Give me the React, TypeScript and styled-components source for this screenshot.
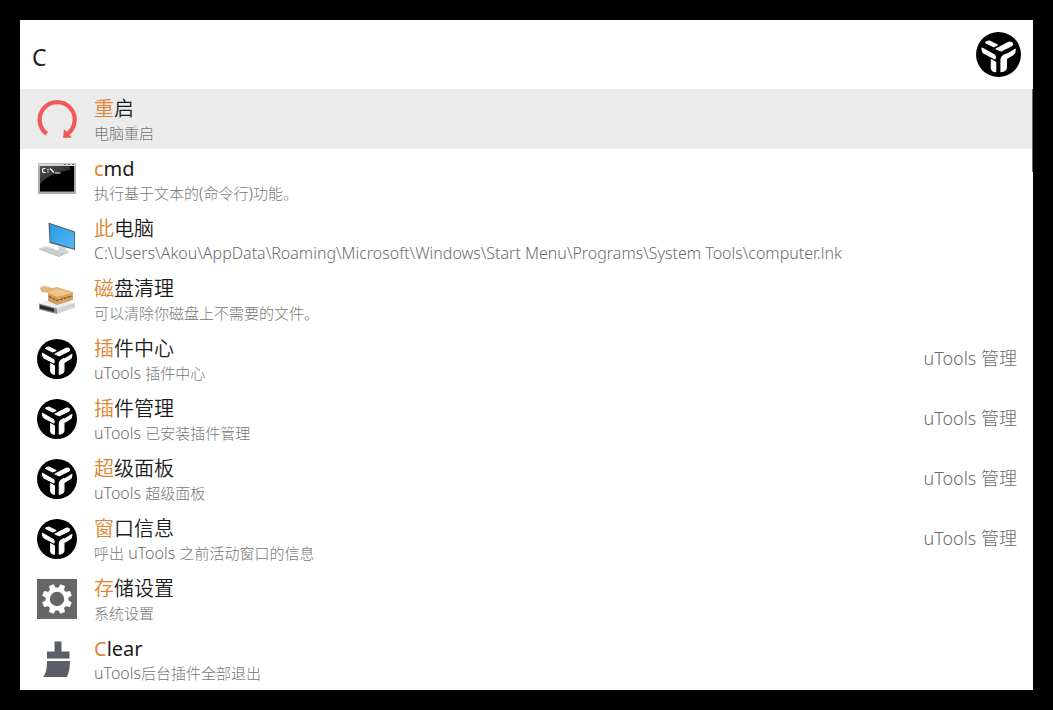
import React from "react";
import styled, { createGlobalStyle } from "styled-components";

const GlobalStyle = createGlobalStyle`
  * { box-sizing: border-box; }
  body {
    margin: 0;
    background: #000;
    font-family: "Noto Sans", "Noto Sans CJK SC", sans-serif;
  }
`;

const Desktop = styled.div`
  min-height: 100vh;
  padding: 20px;
  background: #000;
`;

const Launcher = styled.main`
  background: #fff;
  padding-bottom: 1px;
`;

const SearchBar = styled.header`
  display: flex;
  align-items: center;
  height: 69px;
  padding: 0 12px;
`;

const SearchInput = styled.input`
  flex: 1;
  min-width: 0;
  height: 56px;
  padding: 5px 0 0;
  border: 0;
  outline: 0;
  background: transparent;
  color: #222;
  font-family: inherit;
  font-size: 23px;
`;

const LogoButton = styled.button`
  display: block;
  width: 45px;
  height: 45px;
  padding: 0;
  border: 0;
  border-radius: 50%;
  background: transparent;
`;

const Results = styled.ul`
  position: relative;
  margin: 0;
  padding: 0;
  list-style: none;
`;

const ScrollThumb = styled.div`
  position: absolute;
  top: 0;
  right: 0;
  width: 1px;
  height: 83px;
  background: #6a6a6a;
`;

const Row = styled.li<{ $active?: boolean }>`
  display: flex;
  align-items: center;
  gap: 17px;
  height: 60px;
  padding: 0 16px 0 17px;
  background: ${(p) => (p.$active ? "#ebebeb" : "#fff")};
`;

const IconBox = styled.span`
  flex: none;
  width: 40px;
  height: 40px;
  svg { display: block; }
`;

const Texts = styled.div`
  flex: 1;
  min-width: 0;
  padding-bottom: 1px;
`;

const Title = styled.div`
  font-family: "Noto Sans", "Noto Sans CJK SC DemiLight", "Noto Sans CJK SC", sans-serif;
  font-size: 20px;
  line-height: 28px;
  color: #1c1c1c;
  white-space: nowrap;
`;

const Match = styled.span`
  color: #e08433;
`;

const Detail = styled.div`
  font-size: 15px;
  font-weight: 300;
  line-height: 20px;
  color: #777;
  white-space: nowrap;
  overflow: hidden;
  text-overflow: ellipsis;
`;

const Latin = styled.span`
  font-size: 16px;
  color: #6c6c6c;
`;

const Source = styled.span`
  padding-bottom: 2px;
  font-size: 18px;
  font-weight: 300;
  line-height: 24px;
  color: #6c6c6c;
`;

const UToolsLogo = () => (
  <svg width="100%" height="100%" viewBox="0 0 135 135" aria-hidden="true">
    <circle cx="67.500" cy="67.500" r="67.500" fill="#000" />
    <g fill="#fff" stroke="#fff" strokeWidth="3.500" strokeLinejoin="round">
      <path d="M29 32Q31 27 40 27L64 39L53 44Z" />
      <path d="M60 51L98 31Q109 29 110 37Q108 42 101 44L75 57Z" />
      <path d="M18 48L55 69Q60 73 57 81L24 64Q18 60 18 48Z" />
      <path d="M93 67L118 52Q118 63 111 68L93 79Z" />
      <path d="M46 83L59 91V119Q48 118 46 109Z" />
      <path d="M75 83Q76 75 83 70L91 66V108Q89 118 75 119Z" />
    </g>
  </svg>
);

const RestartIcon = () => (
  <svg width="40" height="40" viewBox="0 0 40 40" aria-hidden="true">
    <path d="M9.800 34.800A17.500 17.500 0 1 1 30.500 34.800" fill="none" stroke="#f25a5a" strokeWidth="4.200" />
    <path d="M27 30L35 38.500L26 39Z" fill="#f25a5a" />
  </svg>
);

const TerminalIcon = () => (
  <svg width="40" height="40" viewBox="0 0 40 40" aria-hidden="true">
    <defs>
      <linearGradient id="glass" x1="0" y1="0" x2="1" y2="1">
        <stop offset="0" stopColor="#555" />
        <stop offset="1" stopColor="#171717" />
      </linearGradient>
    </defs>
    <rect x="1" y="4" width="38" height="31" rx="1" fill="#aaa" />
    <rect x="1.500" y="4.500" width="37" height="2.500" fill="#d4d4d4" />
    <path d="M27 5.500H29M31 5.500H33M35 5.500H37" stroke="#777" />
    <rect x="3" y="7" width="34" height="25.500" fill="#000" />
    <path d="M3 7H33V11Q12 14 3 25Z" fill="url(#glass)" />
    <path d="M8.500 9.500H6.500L5.500 10.500V12.500L6.500 13.500H8.500M11 10V11.200M11 12.300V13.500M13 9.500L17 13.500M18 14H23.500" fill="none" stroke="#fff" strokeWidth="1.200" />
  </svg>
);

const ComputerIcon = () => (
  <svg width="40" height="40" viewBox="0 0 40 40" aria-hidden="true">
    <defs>
      <linearGradient id="screen" x1="0" y1="0" x2="1" y2="1">
        <stop offset="0" stopColor="#279be5" />
        <stop offset="1" stopColor="#57b8f3" />
      </linearGradient>
    </defs>
    <path d="M21 25L29 27V31L33 33L29 35L18 33L22 30Z" fill="#d1d5d8" />
    <path d="M11.500 3.500L38 12.500V31L12.500 24Z" fill="#526878" />
    <path d="M13 5L37 13.500V29.500L13.500 22.500Z" fill="url(#screen)" />
    <path d="M2 29.500L9 27L29 34L22 37.500Z" fill="#d4d8da" />
    <path d="M2 30L22 37.500L29 34" fill="none" stroke="#b4babd" />
    <path d="M6 30L23 36M9 29L26 35M7 31L12 28M12 33L17 30M17 35L22 32" stroke="#b5babd" strokeWidth=".6" />
  </svg>
);

const CleanupIcon = () => (
  <svg width="40" height="40" viewBox="0 0 40 40" aria-hidden="true">
    <path d="M2 25L17 18L38 24.500L20 31Z" fill="#eee" />
    <path d="M2 24.500L20 29.500V35L2 30.500Z" fill="#8a8a8a" />
    <path d="M3 26L17 29.500V33L3 29.500Z" fill="#2d2d2d" />
    <path d="M20 29.500L38 23.500V28.500L20 35Z" fill="#d2d2d2" />
    <path d="M3 10Q3 7 8 7L15 9L20 8L36 13L35 17L19 19L12 14L5 13Z" fill="#e2b579" />
    <path d="M12 13L20 10L36 14L20 18Z" fill="#efc58a" />
    <path d="M11 14L20 18V26L11 22Z" fill="#d39c58" />
    <path d="M20 18L36 14V21L20 26Z" fill="#d6a262" />
    <path d="M12 17.500L20 21.500L35 17" fill="none" stroke="#60452d" strokeWidth="1" strokeDasharray="3 1" />
  </svg>
);

const teeth = [22.5, 67.5, 112.5, 157.5, 202.5, 247.5, 292.5, 337.5];

const SettingsIcon = () => (
  <svg width="40" height="40" viewBox="0 0 40 40" aria-hidden="true">
    <rect width="40" height="40" fill="#666" />
    <circle cx="20" cy="20" r="9.300" fill="none" stroke="#fff" strokeWidth="4.200" />
    {teeth.map((angle) => (
      <path key={angle} d="M16.700 10L17.600 5H22.400L23.300 10Z" fill="#fff" transform={`rotate(${angle} 20 20)`} />
    ))}
  </svg>
);

const BrushIcon = () => (
  <svg width="40" height="40" viewBox="0 0 40 40" aria-hidden="true">
    <path d="M17.500 2.500H24.500V12.500H32.500V19.500H10V12.500H17.500ZM10 22H33Q33 31 30 38H6Q10 34 10 22Z" fill="#5c5f69" />
  </svg>
);

type Result = {
  icon: React.ComponentType;
  match: string;
  rest: string;
  detail: string;
  source?: string;
};

const results: Result[] = [
  { icon: RestartIcon, match: "重", rest: "启", detail: "电脑重启" },
  { icon: TerminalIcon, match: "c", rest: "md", detail: "执行基于文本的(命令行)功能。" },
  { icon: ComputerIcon, match: "此", rest: "电脑", detail: "C:\\Users\\Akou\\AppData\\Roaming\\Microsoft\\Windows\\Start Menu\\Programs\\System Tools\\computer.lnk" },
  { icon: CleanupIcon, match: "磁", rest: "盘清理", detail: "可以清除你磁盘上不需要的文件。" },
  { icon: UToolsLogo, match: "插", rest: "件中心", detail: "uTools 插件中心", source: "uTools 管理" },
  { icon: UToolsLogo, match: "插", rest: "件管理", detail: "uTools 已安装插件管理", source: "uTools 管理" },
  { icon: UToolsLogo, match: "超", rest: "级面板", detail: "uTools 超级面板", source: "uTools 管理" },
  { icon: UToolsLogo, match: "窗", rest: "口信息", detail: "呼出 uTools 之前活动窗口的信息", source: "uTools 管理" },
  { icon: SettingsIcon, match: "存", rest: "储设置", detail: "系统设置" },
  { icon: BrushIcon, match: "C", rest: "lear", detail: "uTools后台插件全部退出" },
];

// Latin runs are set one size up, to look as large as the Chinese beside them.
const mixedScript = (text: string) =>
  text.split(/([\x20-\x7e]+)/).map((run, i) => (i % 2 ? <Latin key={i}>{run}</Latin> : run));

export default function App() {
  return (
    <Desktop lang="zh-CN">
      <GlobalStyle />
      <Launcher>
        <SearchBar>
          <SearchInput aria-label="搜索" defaultValue="C" />
          <LogoButton type="button" aria-label="uTools">
            <UToolsLogo />
          </LogoButton>
        </SearchBar>
        <Results>
          {results.map(({ icon: Icon, ...item }, i) => (
            <Row key={item.match + item.rest} $active={i === 0}>
              <IconBox><Icon /></IconBox>
              <Texts>
                <Title><Match>{item.match}</Match>{item.rest}</Title>
                <Detail>{mixedScript(item.detail)}</Detail>
              </Texts>
              {item.source && <Source>{item.source}</Source>}
            </Row>
          ))}
          <ScrollThumb />
        </Results>
      </Launcher>
    </Desktop>
  );
}
